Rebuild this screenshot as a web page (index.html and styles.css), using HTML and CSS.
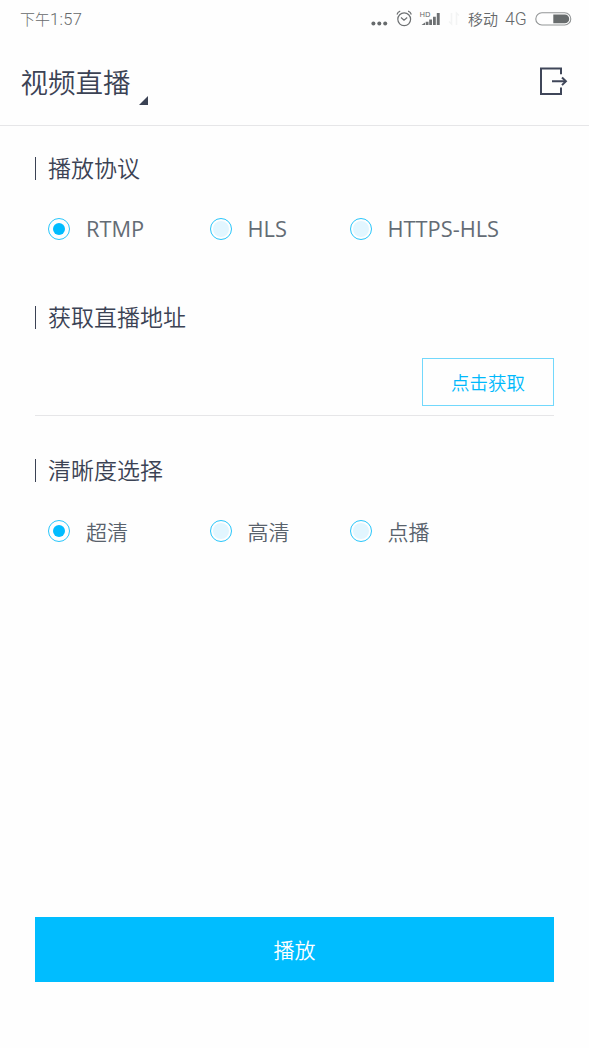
FILE: index.html
```html
<!DOCTYPE html>
<html lang="zh-CN">
<head>
<meta charset="utf-8">
<title>视频直播</title>
<link rel="stylesheet" href="styles.css">
</head>
<body>
<div class="screen">
  <div class="status">
    <span class="time">下午<span class="digits">1:57</span></span>
    <svg class="status-icons" width="92" height="24" viewBox="368 7 92 24">
      <g fill="#666a6c"><circle cx="373.400" cy="23.600" r="2"/><circle cx="379.300" cy="23.600" r="2"/><circle cx="385.200" cy="23.600" r="2"/></g>
      <g fill="none" stroke="#6d7072" stroke-width="1.200"><circle cx="404.200" cy="19.300" r="6.400"/><path d="M401 17.500l3 2.700 3.200-2.700M397 14.500q.6-2.600 3.200-3.400M411.300 14.500q-.6-2.600-3.200-3.400"/></g>
      <text class="hd" x="419.500" y="16.700">HD</text>
      <path fill="#6d7072" d="M421.500 25l3.500-2.600V25zM425.700 21.700h2.800V25h-2.800zM429.200 19.500h2.800V25h-2.800zM433 16.800h2.800V25H433zM436.800 13h2.900v12h-2.900z"/>
      <path fill="none" stroke="#f3f4f4" stroke-width="1.500" d="M451.500 13v11l-2.500-2.500M456.500 25V13l2.500 2.500"/>
    </svg>
    <span class="carrier">移动</span>
    <span class="network">4G</span>
    <svg class="battery" width="37" height="14" viewBox="0 0 37 14"><rect x=".8" y=".8" width="35" height="12.200" rx="6.100" fill="none" stroke="#929596" stroke-width="1.100"/><path fill="#686c6d" d="M18.300 2.500h11.500a4.400 4.400 0 0 1 0 8.800H18.300z"/></svg>
  </div>
  <header class="header">
    <h1 class="title">视频直播</h1>
    <svg class="corner" width="9" height="9" viewBox="0 0 9 9"><path fill="#3b4254" d="M9 0v9H0z"/></svg>
    <svg class="exit" width="30" height="30" viewBox="0 0 30 30"><g fill="none" stroke="#3f4659" stroke-width="2"><path d="M23 8.200V2.500H3v25.500h20v-6.500M14 15.300h14"/><path d="M24 11.500l3.900 3.800-3.900 3.800"/></g></svg>
  </header>
  <main class="main">
    <h2 class="heading">播放协议</h2>
    <div class="options">
      <label class="option"><i class="radio on"></i><span class="latin">RTMP</span></label>
      <label class="option"><i class="radio"></i><span class="latin">HLS</span></label>
      <label class="option"><i class="radio"></i><span class="latin">HTTPS-HLS</span></label>
    </div>
    <h2 class="heading address">获取直播地址</h2>
    <div class="field"><button class="fetch">点击获取</button></div>
    <h2 class="heading quality">清晰度选择</h2>
    <div class="options">
      <label class="option"><i class="radio on"></i><span>超清</span></label>
      <label class="option"><i class="radio"></i><span>高清</span></label>
      <label class="option"><i class="radio"></i><span>点播</span></label>
    </div>
    <button class="play">播放</button>
  </main>
</div>
</body>
</html>
```

FILE: styles.css
```css
* { box-sizing: border-box; }
body {
  margin: 0;
  background: #fefefe;
  font-family: "Noto Sans CJK SC", sans-serif;
  font-weight: 350;
  color: #3b4254;
}
.screen { height: 1048px; display: flex; flex-direction: column; overflow: hidden; }
.status {
  height: 38px;
  display: flex;
  align-items: center;
  padding: 0 17px 0 20px;
  color: #66696b;
  font-size: 15px;
  line-height: 38px;
  white-space: nowrap;
}
.time { font-weight: 300; }
.digits { font-family: Roboto, "Noto Sans", sans-serif; font-size: 16.5px; letter-spacing: .35px; }
.status-icons { margin-left: auto; }
.hd { font: 7.5px "Noto Sans", sans-serif; fill: #66696b; }
.carrier { margin-left: 8px; font-size: 15px; }
.network { margin-left: 7px; width: 23px; font-family: Roboto, "Noto Sans", sans-serif; font-weight: 300; font-size: 17.5px; }
.battery { margin-left: 7px; }
.header {
  height: 88px;
  display: flex;
  align-items: flex-start;
  border-bottom: 1px solid #e6e6e8;
  padding: 0 21px 0 20.5px;
}
.title { margin: 23px 0 0; font-size: 27.5px; line-height: 40px; font-weight: 350; white-space: nowrap; }
.corner { margin: 58px 0 0 8.5px; }
.exit { margin: 28px 0 0 auto; }
.main { flex: 1; display: flex; flex-direction: column; padding: 31px 35px 66px; }
.heading {
  margin: 0;
  height: 23px;
  flex: none;
  padding-left: 12px;
  border-left: 1px solid #3b4254;
  font-size: 23px;
  line-height: 20px;
  font-weight: 350;
}
.address { margin-top: 65px; }
.quality { margin-top: 43px; }
.options {
  display: grid;
  grid-template-columns: 161.5px 140px 1fr;
  margin-top: 37px;
  margin-bottom: 1px;
  padding-left: 13px;
  height: 23px;
}
.option { display: flex; align-items: center; gap: 16px; font-size: 21px; line-height: 24px; color: #59626c; white-space: nowrap; }
.option .latin { font-family: "Open Sans", "Noto Sans", sans-serif; font-size: 21.8px; font-weight: 400; color: #646c75; }
.radio {
  width: 22px;
  height: 22px;
  flex: none;
  border: 1.5px solid #28c6fb;
  border-radius: 50%;
  padding: 2px;
  background: #e2f6ff content-box;
}
.radio.on { padding: 4px; background: #00bcff content-box; }
.field { margin-top: 29px; height: 58px; display: flex; justify-content: flex-end; border-bottom: 1px solid #e6e6e8; }
button { font-family: inherit; font-weight: 350; padding: 0; border-radius: 0; }
.fetch { width: 132px; height: 48px; background: transparent; border: 1px solid #72d8fc; color: #00b9fc; font-size: 18.5px; }
.play { margin-top: auto; height: 65px; background: #00bdff; border: 0; color: #fff; font-size: 21px; padding-bottom: 1px; }
```
